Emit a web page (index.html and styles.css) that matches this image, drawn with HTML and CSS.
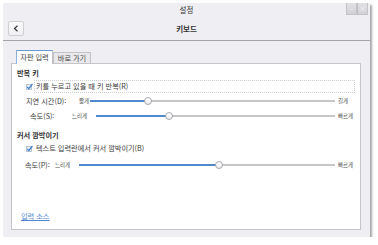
FILE: index.html
```html
<!DOCTYPE html>
<html lang="ko">
<head>
<meta charset="utf-8">
<link rel="stylesheet" href="styles.css">
</head>
<body>
<div class="win">
  <div class="titlebar">
    <span></span>
    <span class="title">설정</span>
    <div class="wbtns"><span class="wbtn">–</span><span class="wbtn">×</span></div>
  </div>
  <div class="header">
    <div class="back"><svg width="6" height="7" viewBox="0 0 6 7"><path d="M4.5 0.8 L1.5 3.5 L4.5 6.2" fill="none" stroke="#333" stroke-width="1.2"/></svg></div>
    <span class="htitle">키보드</span>
    <span></span>
  </div>
  <div class="content">
    <div class="tabs">
      <div class="tab active">자판 입력</div>
      <div class="tab">바로 가기</div>
    </div>
    <div class="panel">
      <div class="heading">반복 키</div>
      <div class="crow">
        <svg class="cbox" width="7" height="7" viewBox="0 0 7 7"><rect x="0.5" y="1.5" width="5" height="5" fill="#e9eef6" stroke="#aab6c8" stroke-width="0.8"/><path d="M1.3 4 L2.8 5.6 L6.5 1" fill="none" stroke="#3f7fd0" stroke-width="1.3"/></svg>
        <span class="clabel focus">키를 누르고 있을 때 키 반복(R)</span>
      </div>
      <div class="srow r1">
        <span class="slbl">지연 시간(D):</span>
        <span class="smin">짧게</span>
        <div class="track"><div class="fill" style="width:23.7%"></div><div class="knob"></div><div class="rest"></div></div>
        <span class="smax">길게</span>
      </div>
      <div class="srow r2">
        <span class="slbl">속도(S):</span>
        <span class="smin">느리게</span>
        <div class="track"><div class="fill" style="width:30.5%"></div><div class="knob"></div><div class="rest"></div></div>
        <span class="smax">빠르게</span>
      </div>
      <div class="heading h2">커서 깜박이기</div>
      <div class="crow">
        <svg class="cbox" width="7" height="7" viewBox="0 0 7 7"><rect x="0.5" y="1.5" width="5" height="5" fill="#e9eef6" stroke="#aab6c8" stroke-width="0.8"/><path d="M1.3 4 L2.8 5.6 L6.5 1" fill="none" stroke="#3f7fd0" stroke-width="1.3"/></svg>
        <span class="clabel">텍스트 입력란에서 커서 깜박이기(B)</span>
      </div>
      <div class="srow r3">
        <span class="slbl">속도(P):</span>
        <span class="smin">느리게</span>
        <div class="track"><div class="fill" style="width:54.7%"></div><div class="knob"></div><div class="rest"></div></div>
        <span class="smax">빠르게</span>
      </div>
      <div class="linkrow"><a class="link" href="#">입력 소스</a></div>
    </div>
  </div>
</div>
</body>
</html>
```
FILE: styles.css
```css
html, body {
  margin: 0;
  padding: 0;
  background: #ffffff;
}
body {
  font-family: "Noto Sans CJK KR", "Noto Sans", sans-serif;
  font-size: 7.2px;
  color: #3a3a3a;
}
.win {
  margin: 3px 0 0 3px;
  width: 367px;
  height: 234px;
  background: #efeef2;
  box-shadow: 2px 2px 2px rgba(0, 0, 0, 0.35);
  display: flex;
  flex-direction: column;
}
.titlebar {
  height: 14px;
  display: grid;
  grid-template-columns: 1fr auto 1fr;
  align-items: start;
}
.title {
  line-height: 14px;
  font-size: 7.5px;
  color: #333;
}
.wbtns {
  justify-self: end;
  margin-right: 2px;
  display: flex;
}
.wbtn {
  width: 11px;
  height: 12px;
  background: linear-gradient(#e2e2e6, #d2d2d6);
  border: 1px solid #c4c4c8;
  border-top: none;
  color: #fafafa;
  font-size: 7px;
  line-height: 11px;
  text-align: center;
  box-sizing: border-box;
}
.wbtn + .wbtn {
  border-left: 1px solid #bdbdc2;
}
.header {
  height: 23px;
  border-bottom: 1px solid #a4a4a8;
  display: grid;
  grid-template-columns: 1fr auto 1fr;
  align-items: center;
}
.back {
  margin-left: 5px;
  margin-top: -1px;
  width: 16px;
  height: 15px;
  box-sizing: border-box;
  border: 1px solid #cfcfd3;
  border-radius: 2px;
  background: linear-gradient(#fbfbfc, #efeff1);
  display: flex;
  align-items: center;
  justify-content: center;
}
.htitle {
  font-weight: bold;
  font-size: 7.5px;
  color: #333;
  line-height: 12px;
  margin-top: 1px;
}
.content {
  flex: 1;
  display: flex;
  flex-direction: column;
  padding: 8px 9px 7px 8px;
}
.tabs {
  height: 14px;
  display: flex;
  align-items: flex-end;
  padding-left: 5px;
}
.tab {
  height: 11px;
  width: 38px;
  box-sizing: border-box;
  border: 1px solid #c2c2c6;
  border-bottom: none;
  background: #e9e9ec;
  text-align: center;
  line-height: 10px;
  color: #444;
}
.tab.active {
  height: 14px;
  width: 37px;
  background: #ffffff;
  border-top: 1px solid #6a9bd6;
  border-left: 1px solid #8fb3e0;
  line-height: 13px;
  position: relative;
  top: 1px;
}
.panel {
  flex: 1;
  background: #ffffff;
  border: 1px solid #c6c6ca;
  padding: 4px 5px 8px 0;
  display: flex;
  flex-direction: column;
}
.heading {
  height: 11px;
  line-height: 11px;
  font-weight: bold;
  padding-left: 5px;
  color: #333;
}
.heading.h2 {
  margin-top: 7px;
}
.crow {
  height: 14px;
  display: flex;
  align-items: center;
  padding-left: 14px;
}
.cbox {
  flex: none;
  margin-right: 1px;
}
.clabel {
  flex: 1;
  height: 13px;
  margin-top: 1px;
  box-sizing: border-box;
  border: 1px dotted transparent;
  padding-left: 1px;
  line-height: 11px;
}
.clabel.focus {
  border-color: #cfcfd3;
}
.srow {
  height: 15px;
  display: flex;
  align-items: center;
  padding-left: 14px;
}
.srow.r3 {
  height: 16px;
  margin-top: 2px;
  padding-left: 13px;
}
.slbl {
  flex: none;
}
.r1 .slbl { width: 53px; }
.r2 .slbl { width: 42px; margin-left: 4px; }
.r3 .slbl { width: 30px; }
.smin, .smax {
  flex: none;
  font-size: 5.5px;
  color: #555;
}
.r1 .smin { width: 11px; }
.r2 .smin { width: 24px; }
.r3 .smin { width: 24px; }
.smax {
  width: 17px;
  margin-left: 3px;
}
.track {
  flex: 1;
  height: 9px;
  display: flex;
  align-items: center;
}
.fill {
  height: 2px;
  background: #5189cf;
  flex: none;
}
.rest {
  flex: 1;
  height: 2px;
  background: #c6c6c8;
}
.knob {
  flex: none;
  width: 8px;
  height: 8px;
  margin: 0 -4px;
  box-sizing: border-box;
  border-radius: 50%;
  border: 1px solid #a9a9ad;
  background: linear-gradient(#ffffff, #ececef);
  position: relative;
  z-index: 1;
}
.linkrow {
  margin-top: auto;
  height: 10px;
  line-height: 10px;
  padding-left: 9px;
}
.link {
  color: #4f86cf;
  text-decoration: underline;
}
```
